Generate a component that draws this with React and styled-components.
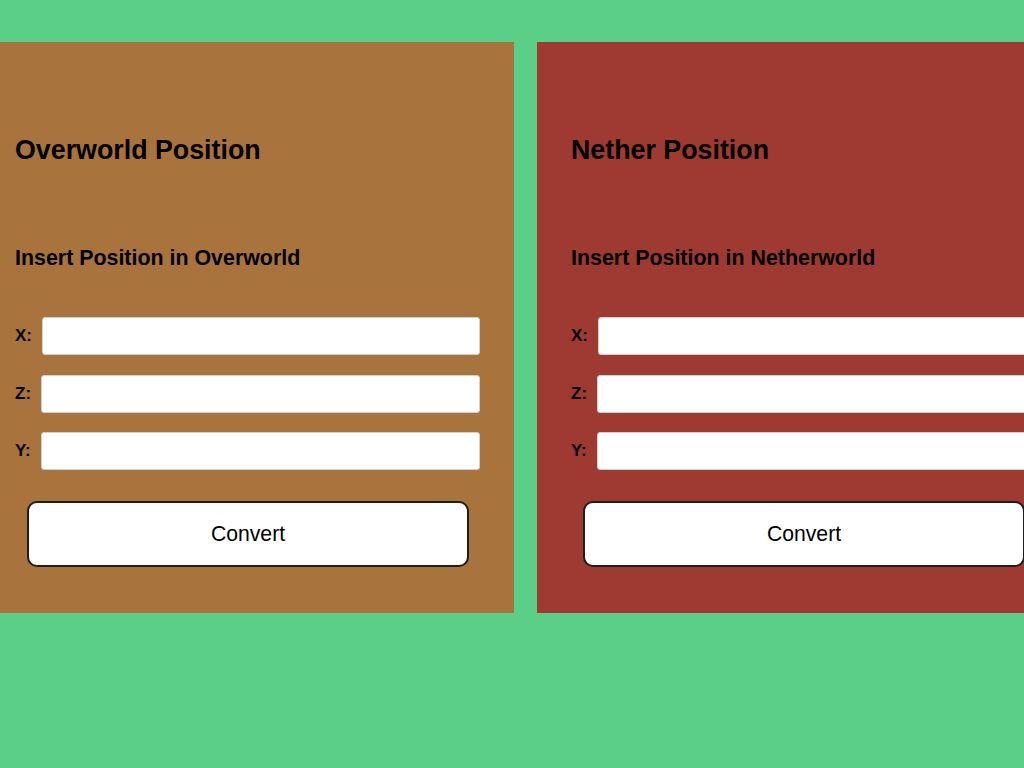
import React from 'react';
import styled, { createGlobalStyle } from 'styled-components';

const GlobalStyle = createGlobalStyle`
  html, body {
    margin: 0;
    padding: 0;
    background: #5bcf88;
    overflow: hidden;
    font-family: "Liberation Sans", Arial, Helvetica, sans-serif;
  }
`;

const Page = styled.div`
  min-height: 768px;
  padding-top: 42px;
  box-sizing: border-box;
  background: #5bcf88;
`;

const Row = styled.div`
  display: flex;
  gap: 23px;
  margin-left: -19px;
`;

const Panel = styled.section`
  flex: 0 0 533px;
  box-sizing: border-box;
  padding: 93px 34px 46px;
  background: ${props => props.$color};
  display: flex;
  flex-direction: column;
`;

const Title = styled.h2`
  margin: 0;
  font-size: 26.8px;
  line-height: 31px;
  font-weight: 700;
  color: #000;
`;

const Subtitle = styled.h3`
  margin: 80px 0 0;
  font-size: 21.4px;
  line-height: 24px;
  font-weight: 700;
  color: #000;
`;

const Fields = styled.div`
  margin-top: 47px;
  display: flex;
  flex-direction: column;
  gap: 19.5px;
`;

const Field = styled.label`
  display: flex;
  align-items: center;
  gap: 10px;
  font-size: 17px;
  font-weight: 700;
  color: #000;
`;

const Input = styled.input`
  flex: 1;
  min-width: 0;
  height: 38px;
  box-sizing: border-box;
  border: 1px solid #d0d0d0;
  border-radius: 3px;
  background: #fff;
  padding: 0 8px;
  font-size: 17px;
  font-family: inherit;
`;

const ConvertButton = styled.button`
  margin: 31px 11px 0 12px;
  height: 66px;
  border: 2px solid #1e1e1e;
  border-radius: 10px;
  background: #fff;
  color: #000;
  font-size: 21.2px;
  font-family: "Liberation Sans", Arial, Helvetica, sans-serif;
  cursor: pointer;
`;

const PositionForm = ({ title, subtitle, color }) => (
  <Panel $color={color}>
    <Title>{title}</Title>
    <Subtitle>{subtitle}</Subtitle>
    <Fields>
      {['X', 'Z', 'Y'].map(axis => (
        <Field key={axis}>
          {axis}:
          <Input type="text" />
        </Field>
      ))}
    </Fields>
    <ConvertButton>Convert</ConvertButton>
  </Panel>
);

export default function App() {
  return (
    <Page>
      <GlobalStyle />
      <Row>
        <PositionForm
          title="Overworld Position"
          subtitle="Insert Position in Overworld"
          color="#a9733d"
        />
        <PositionForm
          title="Nether Position"
          subtitle="Insert Position in Netherworld"
          color="#9e3a31"
        />
      </Row>
    </Page>
  );
}
